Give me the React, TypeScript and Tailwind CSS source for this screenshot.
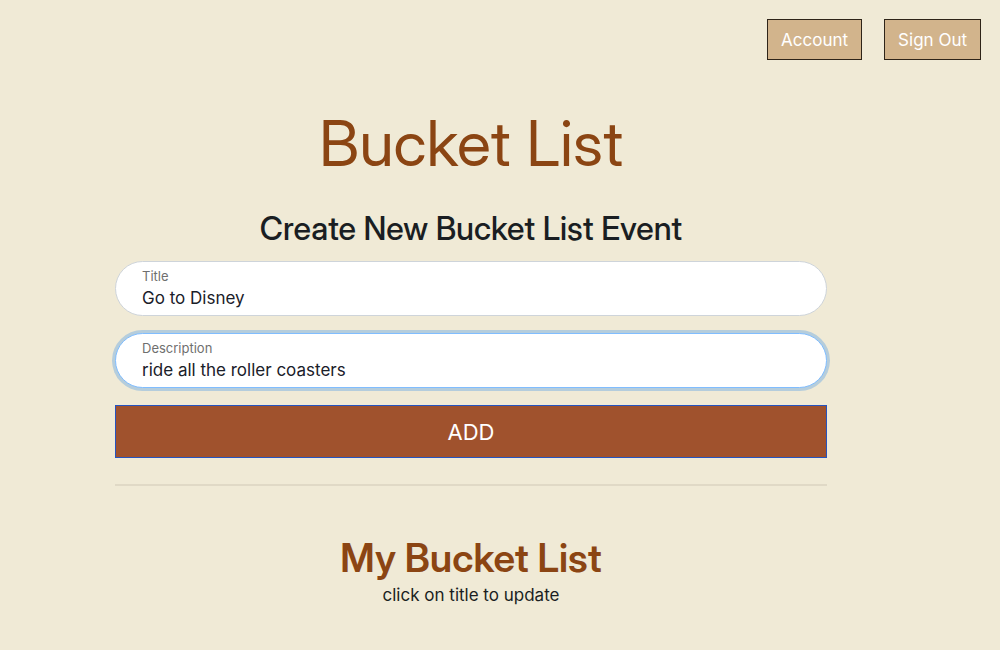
import React, { useState } from "react";

type FieldProps = {
  id: string;
  label: string;
  value: string;
  onChange: (v: string) => void;
  focused?: boolean;
};

function Field({ id, label, value, onChange, focused }: FieldProps) {
  return (
    <div
      className={
        focused
          ? "rounded-full border border-[#80bdff] bg-white px-[26px] pt-[5px] pb-[5px] ring-3 ring-[#b5cddc]"
          : "rounded-full border border-[#ced4da] bg-white px-[26px] pt-[5px] pb-[5px]"
      }
    >
      <label htmlFor={id} className="block text-[13px] leading-[19px] text-[#6f6f6f]">{label}</label>
      <input
        id={id}
        value={value}
        onChange={(e) => onChange(e.target.value)}
        className="block w-full bg-transparent text-[17px] leading-[24px] text-[#1a2029] outline-none"
      />
    </div>
  );
}

export default function App() {
  const [title, setTitle] = useState("Go to Disney");
  const [description, setDescription] = useState("ride all the roller coasters");
  return (
    <div className="min-h-screen bg-[#f0ead6] font-['Inter',sans-serif] text-[#1a1e22]">
      <nav className="flex justify-end gap-[22px] pt-[19px] pr-[19px]">
        <button type="button" className="h-[41px] border border-[#2e2418] bg-[#d2b48c] px-[13px] pt-[2px] text-[17px] text-white">Account</button>
        <button type="button" className="h-[41px] border border-[#2e2418] bg-[#d2b48c] px-[13px] pt-[2px] text-[17px] text-white">Sign Out</button>
      </nav>
      <main className="mr-[173px] ml-[115px] text-center">
        <h1 className="pt-[44px] font-['Inter_Display','Inter',sans-serif] text-[63px] leading-[78px] text-[#8b4513]">Bucket List</h1>
        <h2 className="mt-[28px] font-['Inter_Display','Inter',sans-serif] text-[32px] leading-[38px] font-medium">Create New Bucket List Event</h2>
        <form className="mt-[13px] flex flex-col gap-[17px] text-left" onSubmit={(e) => e.preventDefault()}>
          <Field id="title" label="Title" value={title} onChange={setTitle} />
          <Field id="description" label="Description" value={description} onChange={setDescription} focused />
          <button type="submit" className="h-[53px] w-full border border-[#2554c0] bg-[#a0522d] pt-[2px] text-[22px] text-white">ADD</button>
        </form>
        <hr className="mt-[26px] border-t-2 border-[#e0d9c6]" />
        <h2 className="mt-[49px] font-['Inter_Display','Inter',sans-serif] text-[39px] leading-[46px] font-semibold text-[#8b4513]">My Bucket List</h2>
        <p className="mt-[2px] text-[17px] leading-[24px]">click on title to update</p>
      </main>
    </div>
  );
}
